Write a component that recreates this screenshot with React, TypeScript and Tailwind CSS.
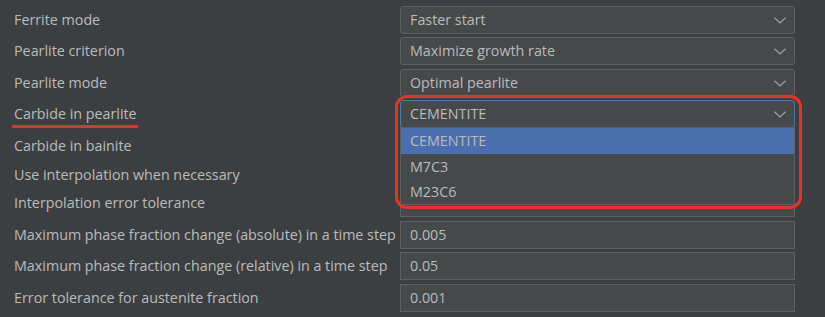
type Row = {
  label: string;
  kind: "combo" | "text" | "check";
  value?: string;
  mt: string;
  focused?: boolean;
};

const rows: Row[] = [
  { label: "Ferrite mode", kind: "combo", value: "Faster start", mt: "mt-[6px]" },
  { label: "Pearlite criterion", kind: "combo", value: "Maximize growth rate", mt: "mt-[3px]" },
  { label: "Pearlite mode", kind: "combo", value: "Optimal pearlite", mt: "mt-[4px]" },
  { label: "Carbide in pearlite", kind: "combo", value: "CEMENTITE", mt: "mt-[3px]", focused: true },
  // value hidden behind the open popup
  { label: "Carbide in bainite", kind: "combo", value: "", mt: "mt-[4px]" },
  { label: "Use interpolation when necessary", kind: "check", mt: "mt-[1px]" },
  { label: "Interpolation error tolerance", kind: "text", value: "", mt: "mt-0" },
  { label: "Maximum phase fraction change (absolute) in a time step", kind: "text", value: "0.005", mt: "mt-[4px]" },
  { label: "Maximum phase fraction change (relative) in a time step", kind: "text", value: "0.05", mt: "mt-[3px]" },
  { label: "Error tolerance for austenite fraction", kind: "text", value: "0.001", mt: "mt-[4px]" },
];

const options = ["CEMENTITE", "M7C3", "M23C6"];

function Chevron() {
  return (
    <svg width="12" height="7" viewBox="0 0 12 7" fill="none">
      <polyline points="0.5,0.8 6,6 11.5,0.8" stroke="#a3a3a3" strokeWidth="1.2" />
    </svg>
  );
}

function Field({ row }: { row: Row }) {
  if (row.kind === "check") {
    return (
      <div className="flex items-center h-full">
        <div className="w-[14px] h-[14px] rounded-[3px] border border-[#6b6b6b] bg-[#43494a]" />
      </div>
    );
  }
  return (
    <div
      className={`h-full flex items-center pl-[9px] pr-[8px] border ${
        row.focused ? "border-[#4a78a8]" : "border-[#5e6161]"
      } ${row.kind === "combo" ? "rounded-[3px]" : ""} bg-[#45494a]`}
    >
      <span className="flex-1">{row.value}</span>
      {row.kind === "combo" && <Chevron />}
    </div>
  );
}

export default function App() {
  return (
    <div
      className="relative w-[825px] h-[317px] bg-[#3c3f41] text-[#bbbbbb] text-[14.3px] overflow-hidden"
      style={{ fontFamily: '"Open Sans", "Noto Sans", sans-serif' }}
    >
      <div className="flex flex-col">
        {rows.map((row) => (
          <div key={row.label} className={`flex items-center h-[28px] ${row.mt}`}>
            <div className="w-[400px] pl-[14px] whitespace-nowrap pb-[1px]">{row.label}</div>
            <div className="w-[395px] h-full">
              <Field row={row} />
            </div>
          </div>
        ))}
      </div>

      {/* red underline under label */}
      <div className="absolute left-[12px] top-[125px] w-[126px] h-[3px] bg-[#e5332a]" />

      {/* open popup list */}
      <div className="absolute left-[400px] top-[127px] w-[395px] h-[78px] border border-[#5e6161] bg-[#45494a] flex flex-col">
        {options.map((opt, i) => (
          <div
            key={opt}
            className={`pl-[9px] flex items-center ${i === 0 ? "bg-[#4b6eaf] h-[26px]" : "h-[25px]"}`}
          >
            {opt}
          </div>
        ))}
      </div>

      {/* red highlight frame */}
      <div className="absolute left-[395px] top-[95px] w-[407px] h-[114px] rounded-[12px] border-[3px] border-[#e5332a]" />
    </div>
  );
}
